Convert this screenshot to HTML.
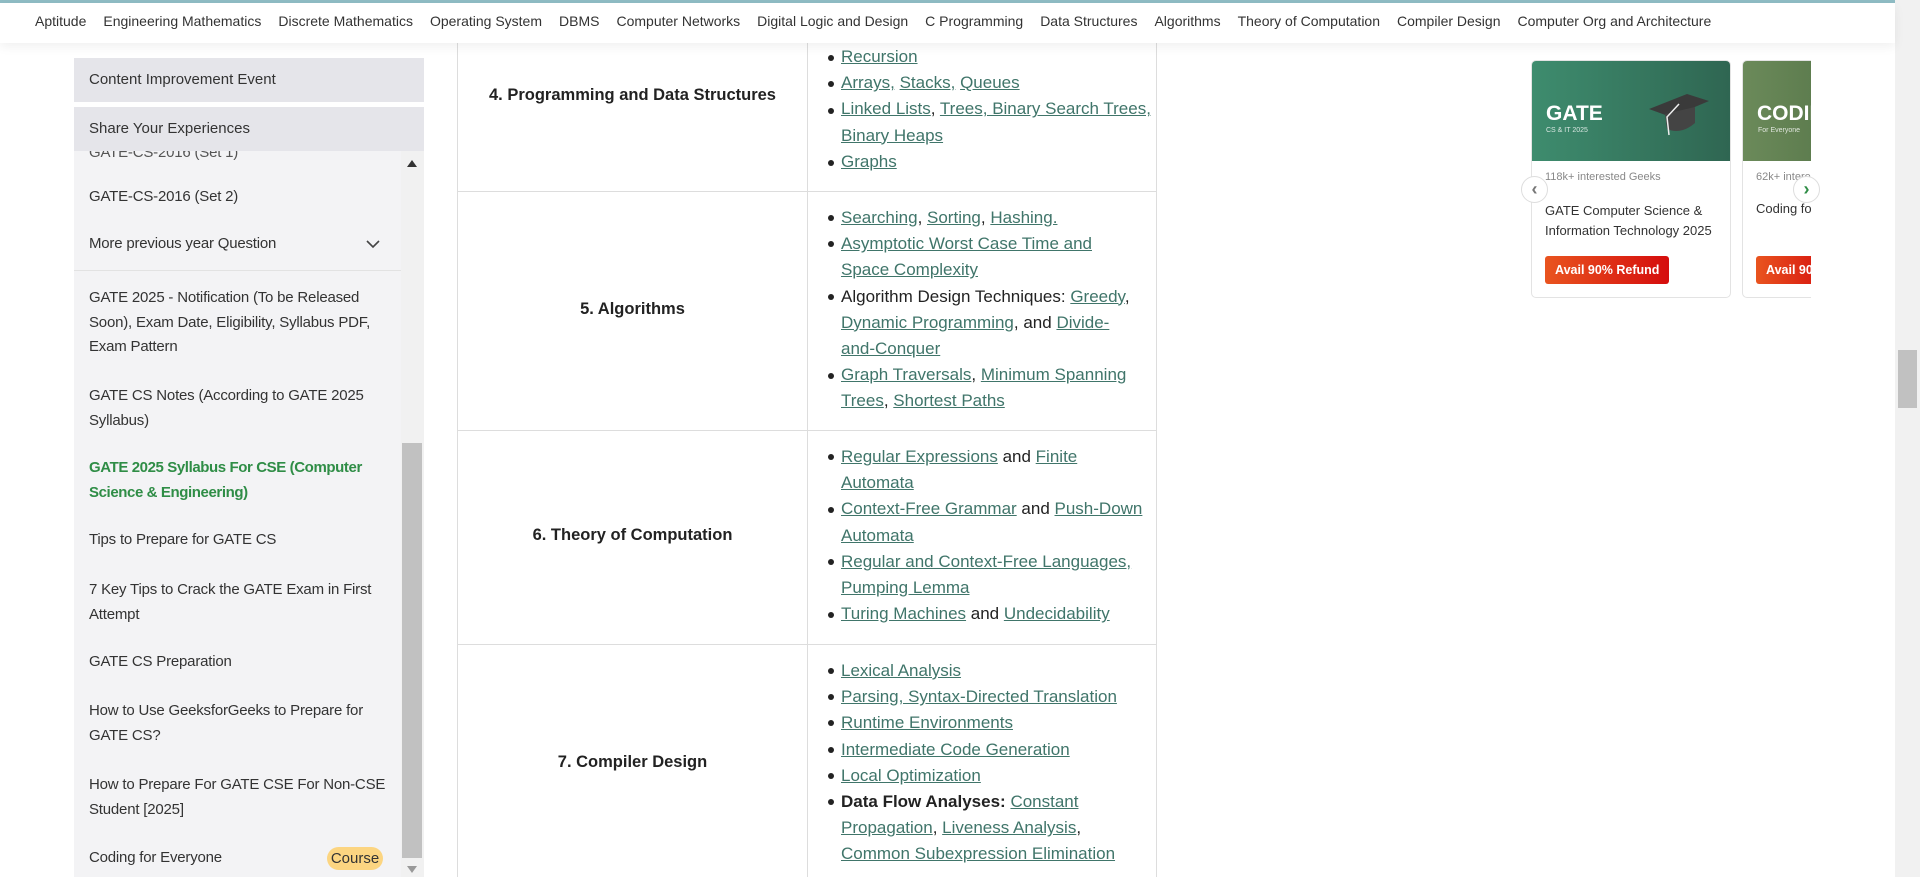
<!DOCTYPE html>
<html><head><meta charset="utf-8"><style>
*{margin:0;padding:0;box-sizing:border-box}
body{width:1920px;height:877px;overflow:hidden;background:#fff;font-family:"Liberation Sans",sans-serif;color:#222;position:relative}
.top{position:absolute;left:0;top:0;width:1920px;height:3px;background:#8fbcc4}
.nav{position:absolute;left:0;top:3px;width:1895px;height:40px;background:#fff;box-shadow:0 4px 10px rgba(0,0,0,.06);font-size:14px;color:#333;white-space:nowrap;padding-left:35px;line-height:36px;z-index:2}
.nav span{margin-right:17px}
.sb{position:absolute;left:74px;top:58px;width:350px}
.box{height:44px;background:#e5e5ea;font-size:15px;line-height:44px;padding-left:15px;color:#333}
.list{position:absolute;left:74px;top:150px;width:350px;height:727px;background:#f3f3f5;overflow:hidden}
.it{position:absolute;left:15px;font-size:15px;line-height:24.5px;color:#333;width:308px;letter-spacing:-0.2px}
.g{color:#2f8d46;font-weight:bold}
.strack{position:absolute;left:327px;top:0;width:23px;height:727px;background:#f1f1f1}
.sthumb{position:absolute;left:328px;top:293px;width:20px;height:415px;background:#c1c1c1}
.tbl{position:absolute;left:457px;top:43px;width:700px;height:834px;border-left:1px solid #ddd;border-right:1px solid #ddd}
.vl{position:absolute;left:807px;top:43px;width:1px;height:834px;background:#ddd}
.hl{position:absolute;left:457px;width:700px;height:1px;background:#ddd}
.t{position:absolute;left:458px;width:349px;text-align:center;font-weight:bold;font-size:16.5px;color:#222}
.ul{position:absolute;left:841px;font-size:17px;line-height:26.2px;color:#222;white-space:nowrap}
.ul a{color:#40756a;text-decoration:underline}
.b{position:absolute;left:828px;width:6px;height:6px;border-radius:50%;background:#222}
.card{position:absolute;top:60px;width:200px;height:238px;border:1px solid #e3e3e3;border-radius:5px;background:#fff;overflow:hidden}
.img{height:100px;color:#fff;position:relative}
.arr{position:absolute;width:27px;height:27px;border-radius:50%;background:#fff;border:1px solid #ddd;font-size:18px;font-weight:bold;text-align:center;line-height:24px}
.btn{position:absolute;left:13px;top:195px;height:28px;padding:0 10px;background:linear-gradient(90deg,#e9541f,#d50d0d);color:#fff;font-weight:bold;font-size:12.5px;line-height:28px;border-radius:3px;white-space:nowrap}
</style></head><body>
<div class="top"></div>
<div class="nav"><span>Aptitude</span><span>Engineering Mathematics</span><span>Discrete Mathematics</span><span>Operating System</span><span>DBMS</span><span>Computer Networks</span><span>Digital Logic and Design</span><span>C Programming</span><span>Data Structures</span><span>Algorithms</span><span>Theory of Computation</span><span>Compiler Design</span><span>Computer Org and Architecture</span></div>

<div class="list">
<div class="it" style="top:-9px;color:#555">GATE-CS-2016 (Set 1)</div>
<div class="it" style="top:35px">GATE-CS-2016 (Set 2)</div>
<div class="it" style="top:82px">More previous year Question</div>
<svg style="position:absolute;left:292px;top:89px" width="14" height="10"><path d="M1 2 L7 8 L13 2" stroke="#444" stroke-width="1.6" fill="none"/></svg>
<div style="position:absolute;left:0;top:120px;width:327px;height:1px;background:#e2e2e2"></div>
<div class="it" style="top:136px">GATE 2025 - Notification (To be Released Soon), Exam Date, Eligibility, Syllabus PDF, Exam Pattern</div>
<div class="it" style="top:234px">GATE CS Notes (According to GATE 2025 Syllabus)</div>
<div class="it g" style="top:306px;letter-spacing:-0.4px">GATE 2025 Syllabus For CSE (Computer Science &amp; Engineering)</div>
<div class="it" style="top:378px">Tips to Prepare for GATE CS</div>
<div class="it" style="top:428px">7 Key Tips to Crack the GATE Exam in First Attempt</div>
<div class="it" style="top:500px">GATE CS Preparation</div>
<div class="it" style="top:549px">How to Use GeeksforGeeks to Prepare for GATE CS?</div>
<div class="it" style="top:623px">How to Prepare For GATE CSE For Non-CSE Student [2025]</div>
<div class="it" style="top:696px">Coding for Everyone</div>
<div style="position:absolute;left:253px;top:697px;width:56px;height:23px;border-radius:12px;background:#fcd581;font-size:15px;line-height:23px;text-align:center;color:#333">Course</div>
<div class="strack"></div>
<div class="sthumb"></div>
<div style="position:absolute;left:333px;top:10px;width:0;height:0;border-left:5px solid transparent;border-right:5px solid transparent;border-bottom:7px solid #333"></div>
<div style="position:absolute;left:333px;top:716px;width:0;height:0;border-left:5px solid transparent;border-right:5px solid transparent;border-top:7px solid #999"></div>
</div>
<div class="sb">
<div class="box">Content Improvement Event</div>
<div class="box" style="margin-top:5px">Share Your Experiences</div>
</div>

<div class="tbl"></div><div class="vl"></div>
<div class="hl" style="top:191px"></div><div class="hl" style="top:430px"></div><div class="hl" style="top:644px"></div>

<div class="t" style="top:86px">4. Programming and Data Structures</div>
<div class="t" style="top:300px">5. Algorithms</div>
<div class="t" style="top:526px">6. Theory of Computation</div>
<div class="t" style="top:753px">7. Compiler Design</div>

<div class="ul" style="top:44px"><a>Recursion</a><br><a>Arrays,</a> <a>Stacks,</a> <a>Queues</a><br><a>Linked Lists</a>, <a>Trees, Binary Search Trees,</a><br><a>Binary Heaps</a><br><a>Graphs</a></div>
<div class="b" style="top:55px"></div><div class="b" style="top:81px"></div><div class="b" style="top:108px"></div><div class="b" style="top:160px"></div>

<div class="ul" style="top:205px"><a>Searching</a>, <a>Sorting</a>, <a>Hashing.</a><br><a>Asymptotic Worst Case Time and</a><br><a>Space Complexity</a><br>Algorithm Design Techniques: <a>Greedy</a>,<br><a>Dynamic Programming</a>, and <a>Divide-</a><br><a>and-Conquer</a><br><a>Graph Traversals</a>, <a>Minimum Spanning</a><br><a>Trees</a>, <a>Shortest Paths</a></div>
<div class="b" style="top:215px"></div><div class="b" style="top:241px"></div><div class="b" style="top:294px"></div><div class="b" style="top:373px"></div>

<div class="ul" style="top:444px"><a>Regular Expressions</a> and <a>Finite</a><br><a>Automata</a><br><a>Context-Free Grammar</a> and <a>Push-Down</a><br><a>Automata</a><br><a>Regular and Context-Free Languages,</a><br><a>Pumping Lemma</a><br><a>Turing Machines</a> and <a>Undecidability</a></div>
<div class="b" style="top:454px"></div><div class="b" style="top:507px"></div><div class="b" style="top:559px"></div><div class="b" style="top:612px"></div>

<div class="ul" style="top:658px"><a>Lexical Analysis</a><br><a>Parsing, Syntax-Directed Translation</a><br><a>Runtime Environments </a><br><a>Intermediate Code Generation </a><br><a>Local Optimization</a><br><b>Data Flow Analyses:</b> <a>Constant</a><br><a>Propagation</a>, <a>Liveness Analysis</a>,<br><a>Common Subexpression Elimination</a></div>
<div class="b" style="top:668px"></div><div class="b" style="top:694px"></div><div class="b" style="top:720px"></div><div class="b" style="top:747px"></div><div class="b" style="top:773px"></div><div class="b" style="top:799px"></div>

<div class="card" style="left:1531px">
<div class="img" style="background:linear-gradient(90deg,#3e8c6e,#2f6652)">
<div style="position:absolute;left:14px;top:41px;font-size:21px;font-weight:bold">GATE</div>
<div style="position:absolute;left:14px;top:66px;font-size:7px;opacity:.8">CS &amp; IT 2025</div>
<svg style="position:absolute;left:115px;top:28px" width="65" height="50"><polygon points="2,20 40,5 62,12 24,28" fill="#3a3a3a"/><path d="M18 25 L20 40 Q34 46 48 34 L48 18" fill="#444"/><path d="M32 15 L20 28 L22 46" stroke="#eee" stroke-width="1.5" fill="none"/></svg>
</div>
<div style="position:absolute;left:13px;top:110px;font-size:11px;color:#888">118k+ interested Geeks</div>
<div style="position:absolute;left:13px;top:140px;font-size:13px;line-height:19.5px;color:#333">GATE Computer Science &amp;<br>Information Technology 2025</div>
<div class="btn">Avail 90% Refund</div>
</div>
<div class="card" style="left:1742px;width:69px;border-right:none;border-radius:5px 0 0 5px">
<div class="img" style="background:linear-gradient(90deg,#6b8a5a,#5e7d4f)">
<div style="position:absolute;left:14px;top:41px;font-size:21px;font-weight:bold">CODIN</div>
<div style="position:absolute;left:15px;top:66px;font-size:7px;opacity:.8">For Everyone</div>
</div>
<div style="position:absolute;left:13px;top:110px;font-size:11px;color:#888;white-space:nowrap">62k+ interested</div>
<div style="position:absolute;left:13px;top:140px;font-size:13px;color:#333;white-space:nowrap">Coding for</div>
<div class="btn">Avail 90%</div>
</div>
<div class="arr" style="left:1521px;top:176px;color:#777">‹</div>
<div class="arr" style="left:1793px;top:176px;color:#2f8d46">›</div>

<div style="position:absolute;left:1895px;top:0;width:25px;height:877px;background:#f1f1f1"></div>
<div style="position:absolute;left:1898px;top:350px;width:19px;height:58px;background:#c1c1c1"></div>
</body></html>
